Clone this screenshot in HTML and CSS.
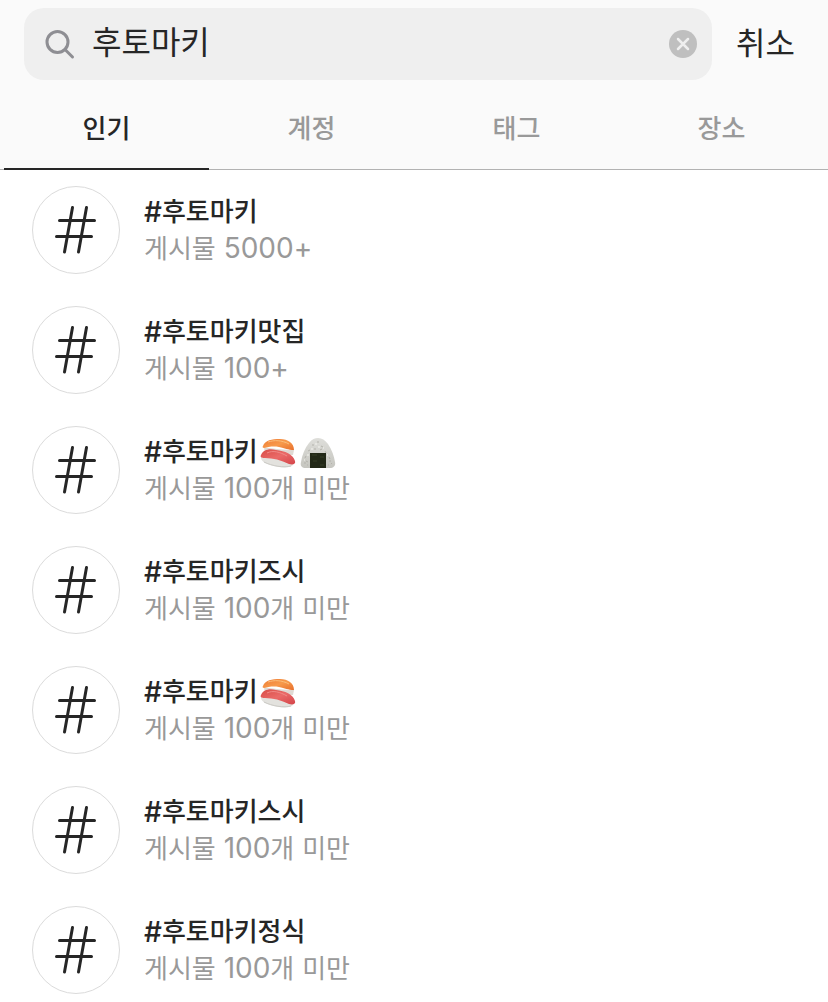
FILE: index.html
```html
<!DOCTYPE html>
<html lang="ko">
<head>
    <meta charset="UTF-8">
    <meta name="viewport" content="width=device-width, initial-scale=1.0">
    <title>검색</title>
    <link rel="stylesheet" href="styles.css">
</head>
<body>
    <!-- Shared icons -->
    <svg class="sprite" aria-hidden="true">
        <defs>
            <linearGradient id="salmon" x1="0" y1="0" x2="1" y2="1">
                <stop offset="0" stop-color="#ee7a32"/>
                <stop offset="0.5" stop-color="#f79a4c"/>
                <stop offset="1" stop-color="#e8702c"/>
            </linearGradient>
            <linearGradient id="tuna" x1="0" y1="0" x2="1" y2="1">
                <stop offset="0" stop-color="#d84c46"/>
                <stop offset="0.5" stop-color="#ea6a68"/>
                <stop offset="1" stop-color="#d4454a"/>
            </linearGradient>
            <linearGradient id="rice" x1="0" y1="0" x2="0" y2="1">
                <stop offset="0" stop-color="#dededa"/>
                <stop offset="1" stop-color="#c6c6c0"/>
            </linearGradient>
        </defs>
        <symbol id="hash" viewBox="0 0 86 86">
            <path d="M39.500 20.500 31.500 65M53.500 20.500 45.500 65M26.500 33.500H61.500M23.500 49.500H58.500" fill="none" stroke="#262626" stroke-width="3" stroke-linecap="round"/>
        </symbol>
        <symbol id="sushi" viewBox="0 0 36 32">
            <path d="M4 9 C12 11 26 12 34 12 L33 17 H5Z" fill="#dfdad4"/>
            <path d="M3 8 C5 2 12 1 20 1 C28 1 34 5 34 12 C28 12 25 10 19 9 C13 8 8 9 4 10 C3 10 2 9 3 8Z" fill="url(#salmon)"/>
            <path d="M8 4 C14 2 22 2 29 6" fill="none" stroke="#fbbf7c" stroke-width="1"/>
            <path d="M1 19 C1 23 4 25 10 27 C18 30 29 30 32 28 C34 26 34 23 31 22Z" fill="#e3e2de"/>
            <path d="M4 24 C12 28 24 30 31 28" fill="none" stroke="#cbcac5" stroke-width="1"/>
            <path d="M1 17 C3 12 9 10 16 12 C25 13 33 16 35 23 C36 26 33 27 29 26 C21 22 13 20 5 20 C1 20 0 19 1 17Z" fill="url(#tuna)"/>
            <path d="M7 15 C13 12 20 14 27 18" fill="none" stroke="#f08a87" stroke-width="1"/>
        </symbol>
        <symbol id="onigiri" viewBox="0 0 36 32">
            <path d="M18 0 C22 0 25 2 28 6 C32 12 34 18 35 24 C36 28 33 30 30 30 H6 C2 30 0 28 1 24 C2 17 5 10 9 5 C12 1 15 0 18 0Z" fill="url(#rice)"/>
            <path d="M12 7h2M17 4h2M21 8l2 1M8 13l2-1M14 11h2M25 13l1 2M20 12l2-1M5 20l1-2M29 19l1 2M4 25h2M31 26l1-1M7 27h1M28 27h1M6 23l2 1M29 23h2" fill="none" stroke="#b4b3ac" stroke-width="1"/>
            <path d="M15 6h2M11 11h2M18 9h2M23 10h1M7 17h2M27 17h1M4 22h1" fill="none" stroke="#f4f4ef" stroke-width="1"/>
            <path d="M10 15H26V30H10Z" fill="#222817"/>
            <path d="M12 17h5M20 19h4M13 23h4M20 27h4" fill="none" stroke="#343d26" stroke-width="1"/>
        </symbol>
    </svg>

    <header class="header">
        <form class="search-bar" role="search">
            <div class="search-box">
                <svg class="search-icon" viewBox="0 0 32 32" aria-hidden="true">
                    <circle cx="13.500" cy="14" r="10.500" fill="none" stroke="#8e8e93" stroke-width="3"/>
                    <path d="M21 21.500 28.500 29" stroke="#8e8e93" stroke-width="3" stroke-linecap="round"/>
                </svg>
                <input class="search-input" type="text" value="후토마키" aria-label="검색">
                <button class="clear" type="button" aria-label="지우기">
                    <svg viewBox="0 0 28 28" aria-hidden="true">
                        <circle cx="14" cy="14" r="14" fill="#bfbfbf"/>
                        <path d="M9 9 19 19M19 9 9 19" stroke="#efefef" stroke-width="2.500" stroke-linecap="round"/>
                    </svg>
                </button>
            </div>
            <button class="cancel" type="button">취소</button>
        </form>
        <nav class="tabs">
            <button class="tab active" type="button">인기</button>
            <button class="tab" type="button">계정</button>
            <button class="tab" type="button">태그</button>
            <button class="tab" type="button">장소</button>
        </nav>
    </header>

    <main>
        <ul class="results">
            <li><a class="result" href="#">
                <span class="avatar"><svg><use href="#hash"/></svg></span>
                <span class="info"><span class="name"><span class="latin">#</span>후토마키</span><span class="count">게시물<span class="latin"> 5000+</span></span></span>
            </a></li>
            <li><a class="result" href="#">
                <span class="avatar"><svg><use href="#hash"/></svg></span>
                <span class="info"><span class="name"><span class="latin">#</span>후토마키맛집</span><span class="count">게시물<span class="latin"> 100+</span></span></span>
            </a></li>
            <li><a class="result" href="#">
                <span class="avatar"><svg><use href="#hash"/></svg></span>
                <span class="info"><span class="name"><span class="latin">#</span>후토마키<svg class="emoji" role="img" aria-label="초밥"><use href="#sushi"/></svg><svg class="emoji" role="img" aria-label="주먹밥"><use href="#onigiri"/></svg></span><span class="count">게시물<span class="latin"> 100</span>개<span class="latin"> </span>미만</span></span>
            </a></li>
            <li><a class="result" href="#">
                <span class="avatar"><svg><use href="#hash"/></svg></span>
                <span class="info"><span class="name"><span class="latin">#</span>후토마키즈시</span><span class="count">게시물<span class="latin"> 100</span>개<span class="latin"> </span>미만</span></span>
            </a></li>
            <li><a class="result" href="#">
                <span class="avatar"><svg><use href="#hash"/></svg></span>
                <span class="info"><span class="name"><span class="latin">#</span>후토마키<svg class="emoji" role="img" aria-label="초밥"><use href="#sushi"/></svg></span><span class="count">게시물<span class="latin"> 100</span>개<span class="latin"> </span>미만</span></span>
            </a></li>
            <li><a class="result" href="#">
                <span class="avatar"><svg><use href="#hash"/></svg></span>
                <span class="info"><span class="name"><span class="latin">#</span>후토마키스시</span><span class="count">게시물<span class="latin"> 100</span>개<span class="latin"> </span>미만</span></span>
            </a></li>
            <li><a class="result" href="#">
                <span class="avatar"><svg><use href="#hash"/></svg></span>
                <span class="info"><span class="name"><span class="latin">#</span>후토마키정식</span><span class="count">게시물<span class="latin"> 100</span>개<span class="latin"> </span>미만</span></span>
            </a></li>
        </ul>
    </main>
</body>
</html>
```
FILE: styles.css
```css
* {
    box-sizing: border-box;
}
body {
    margin: 0;
    background-color: #fff;
    color: #262626;
    font-family: Inter, 'Noto Sans CJK KR', sans-serif;
    font-size: 26px;
}
button, input {
    margin: 0;
    padding: 0;
    border: none;
    background: none;
    color: inherit;
    font-family: inherit;
}
button {
    cursor: pointer;
}
svg {
    display: block;
}
.sprite {
    position: absolute;
    width: 0;
    height: 0;
}
.header {
    background-color: #fafafa;
    border-bottom: 1px solid #b2b2b2;
}
.search-bar {
    display: flex;
    align-items: center;
    gap: 24px;
    padding: 8px 33px 0 24px;
}
.search-box {
    flex: 1;
    min-width: 0;
    display: flex;
    align-items: center;
    height: 72px;
    padding: 0 15px 0 20px;
    background-color: #efefef;
    border-radius: 20px;
}
.search-icon {
    flex: none;
    width: 32px;
    height: 32px;
}
.search-input {
    flex: 1;
    min-width: 0;
    height: 72px;
    padding: 0 16px 8px;
    font-size: 32px;
    outline: none;
}
.clear svg {
    width: 28px;
    height: 28px;
}
.cancel {
    padding-bottom: 6px;
    font-size: 32px;
}
.tabs {
    display: flex;
    padding: 0 4px;
}
.tab {
    flex: 1;
    height: 90px;
    margin-bottom: -1px;
    padding-top: 4px;
    border-bottom: 2px solid transparent;
    color: #999;
    font-size: 26px;
    font-weight: 500;
}
.tab.active {
    border-color: #262626;
    color: #262626;
}
.results {
    margin: 0;
    padding: 16px 32px 8px;
    list-style: none;
    display: flex;
    flex-direction: column;
    gap: 32px;
}
.result {
    display: flex;
    align-items: center;
    gap: 24px;
    color: inherit;
    text-decoration: none;
}
.avatar {
    flex: none;
    width: 88px;
    height: 88px;
    border: 1px solid #dbdbdb;
    border-radius: 50%;
}
.avatar svg {
    width: 100%;
    height: 100%;
}
.info {
    display: flex;
    flex-direction: column;
    line-height: 36px;
}
.name {
    display: flex;
    align-items: center;
    height: 36px;
    font-weight: 500;
}
.latin {
    font-size: 28px;
}
.emoji {
    width: 36px;
    height: 32px;
    margin: 4px 2px 0;
}
.count {
    height: 36px;
    color: #999;
}
```
